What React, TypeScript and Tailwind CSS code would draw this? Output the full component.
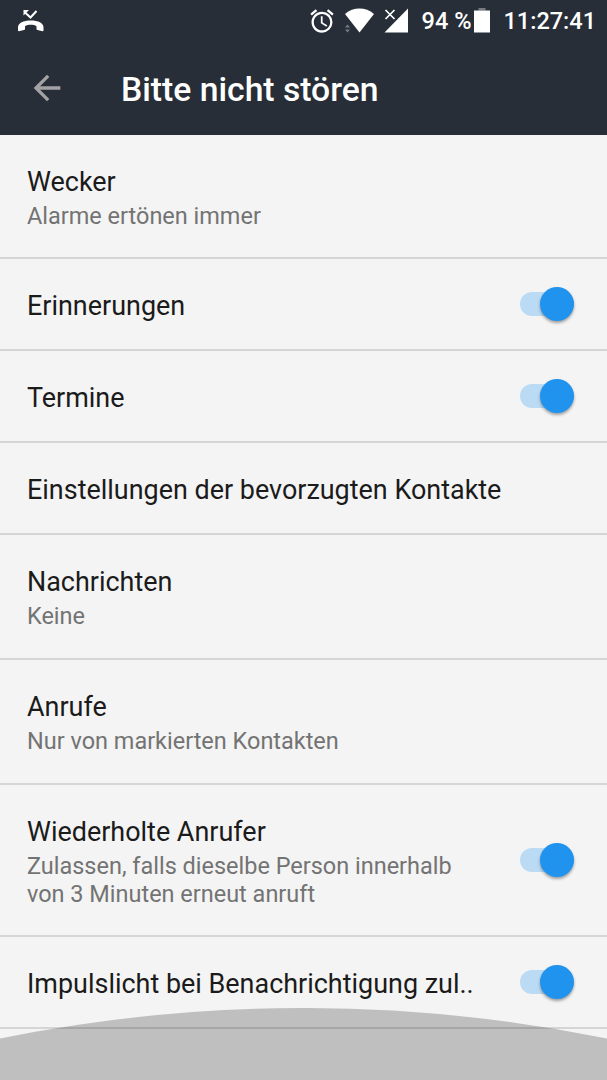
import { useState } from "react";
import { MdAccessAlarm, MdArrowBack } from "react-icons/md";

type Setting = {
  id: string;
  title: string;
  summary?: string;
  toggle?: boolean;
  height: string;
};

const settings: Setting[] = [
  { id: "alarm", title: "Wecker", summary: "Alarme ertönen immer", height: "h-[124px] pt-1" },
  { id: "reminders", title: "Erinnerungen", toggle: true, height: "h-[92px]" },
  { id: "events", title: "Termine", toggle: true, height: "h-[92px]" },
  { id: "contacts", title: "Einstellungen der bevorzugten Kontakte", height: "h-[92px]" },
  { id: "messages", title: "Nachrichten", summary: "Keine", height: "h-[125px] pt-[3px]" },
  { id: "calls", title: "Anrufe", summary: "Nur von markierten Kontakten", height: "h-[125px] pt-[3px]" },
  {
    id: "repeat",
    title: "Wiederholte Anrufer",
    summary: "Zulassen, falls dieselbe Person innerhalb von 3 Minuten erneut anruft",
    toggle: true,
    height: "h-[152px]",
  },
  { id: "light", title: "Impulslicht bei Benachrichtigung zul..", toggle: true, height: "h-[92px]" },
];

function MissedCallIcon() {
  return (
    <svg className="mr-auto h-[26px] w-[26px]" viewBox="0 0 26 26" fill="none">
      <path d="M7 4.500l5.500 5L18.500 3" stroke="currentColor" strokeWidth="2" />
      <path d="M5.500 2H11L5.500 7.500z" fill="currentColor" />
      <path
        d="M0 19.500C0 15 5.500 12.600 12.800 12.600S25.500 15 25.500 19.500V22.300q0 .9-.9.900L19.500 22q-1-.2-1-1.100V18.200C15.500 16.300 10 16.300 7 18.200V20.900q0 .9-1 1.100L.9 23.200Q0 23.200 0 22.300z"
        fill="currentColor"
      />
    </svg>
  );
}

function StatusBar() {
  return (
    <div className="flex h-[42px] items-center pl-[18px] pr-[11px] text-white">
      <MissedCallIcon />
      <MdAccessAlarm className="size-[28px]" />
      <svg className="ml-2 h-[26px] w-[31px]" viewBox="0 0 31 26">
        <path d="M1 6C9.500-1.200 21.500-1.200 30 6L15.500 24.500z" fill="currentColor" />
        <path d="M1 19.500l2.500-3 2.500 3zM1 21.500l2.500 3 2.500-3z" fill="#777b80" />
      </svg>
      <svg className="ml-[9px] h-[26px] w-[25px]" viewBox="0 0 25 26">
        <path d="M24 .5v24H.5z" fill="currentColor" />
        <path d="M1.500 2l9 9M10.500 2l-9 9" stroke="currentColor" strokeWidth="1.700" />
      </svg>
      <span className="ml-[13px] whitespace-nowrap pt-[2px] text-[23.500px] leading-none font-medium">94 %</span>
      <svg className="ml-[3px] h-[26px] w-[16px]" viewBox="0 0 16 26">
        <path d="M4.500 0h7v2.500h-7z" fill="#777b80" />
        <path d="M0 2.500h16v22H0z" fill="currentColor" />
      </svg>
      <span className="ml-[13px] pt-[2px] text-[23.500px] leading-none font-medium">11:27:41</span>
    </div>
  );
}

function Toggle({ label }: { label: string }) {
  const [on, setOn] = useState(true);

  return (
    <button
      type="button"
      role="switch"
      aria-checked={on}
      aria-label={label}
      onClick={() => setOn(!on)}
      className={`flex h-6 w-[54px] shrink-0 items-center rounded-full ${
        on ? "justify-end bg-[#bbdbf4]" : "justify-start bg-gray-300"
      }`}
    >
      <span
        className={`size-[34px] shrink-0 rounded-full shadow-[0_2px_3px_rgba(0,0,0,0.35)] ${
          on ? "bg-[#2093ef]" : "bg-gray-50"
        }`}
      />
    </button>
  );
}

function SettingRow({ setting }: { setting: Setting }) {
  return (
    <li
      className={`flex items-center justify-between border-b-2 border-[#d5d5d5] pl-[27px] pr-[33px] ${setting.height}`}
    >
      <div className={setting.toggle ? "w-[450px] pt-[3px]" : setting.summary ? "" : "pt-[3px]"}>
        <div className="whitespace-nowrap text-[26.950px] leading-8 text-[#1b1b1b]">{setting.title}</div>
        {setting.summary && (
          <div className="mt-1 text-[23.470px] leading-7 text-[#737373]">{setting.summary}</div>
        )}
      </div>
      {setting.toggle && <Toggle label={setting.title} />}
    </li>
  );
}

export default function App() {
  return (
    <div className="relative h-[1080px] w-[607px] overflow-hidden bg-[#f4f4f4] font-[Roboto,sans-serif]">
      <header className="h-[135px] bg-[#272e38]">
        <StatusBar />
        <div className="flex h-[92px] items-center pl-[27px]">
          <button type="button" aria-label="Zurück" className="text-[#a3a3a3]">
            <MdArrowBack className="size-[40px]" />
          </button>
          <h1 className="ml-[54px] pt-[3px] text-[33.700px] leading-none font-medium text-white">
            Bitte nicht stören
          </h1>
        </div>
      </header>

      <ul>
        {settings.map((setting) => (
          <SettingRow key={setting.id} setting={setting} />
        ))}
      </ul>

      <svg className="pointer-events-none absolute bottom-0 left-0 h-[72px] w-[607px]" viewBox="0 0 607 72">
        <path d="M0 30.500A1525 1525 0 0 1 607 30.500V72H0z" fill="#000" fillOpacity="0.215" />
      </svg>
    </div>
  );
}
